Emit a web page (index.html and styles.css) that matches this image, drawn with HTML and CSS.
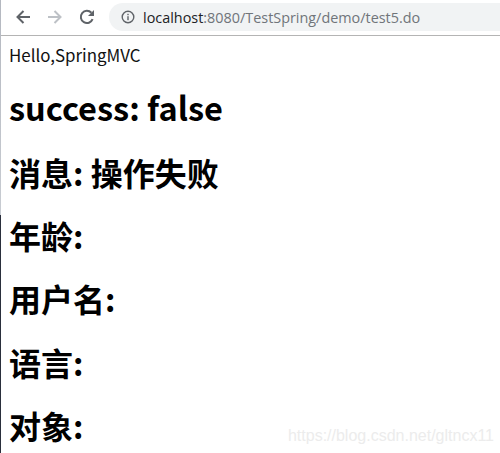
FILE: index.html

```html
<!DOCTYPE html>
<html lang="zh">
<head>
  <meta charset="UTF-8" />
  <title>test5</title>
  <link rel="stylesheet" href="styles.css">
</head>
<body>
  <div class="edge"></div>
  <div class="toolbar">
    <svg class="nav" viewBox="0 0 16 16" width="16" height="16">
      <path d="M15 8H2.5M8.5 2L2.5 8L8.5 14" fill="none" stroke="#5f6368" stroke-width="2"/>
    </svg>
    <svg class="nav" viewBox="0 0 16 16" width="16" height="16">
      <path d="M1 8H13.5M7.5 2L13.5 8L7.5 14" fill="none" stroke="#bdc1c6" stroke-width="2"/>
    </svg>
    <svg class="nav" viewBox="0 0 16 16" width="16" height="16">
      <path d="M13.6 10.2A6.1 6.1 0 1 1 12.4 3.8" fill="none" stroke="#5f6368" stroke-width="2"/>
      <path d="M15 1V7H9Z" fill="#5f6368"/>
    </svg>
    <div class="address">
      <svg class="info" viewBox="0 0 14 14" width="14" height="14">
        <circle cx="7" cy="7" r="5.8" fill="none" stroke="#5f6368" stroke-width="1.4"/>
        <rect x="6.3" y="6.2" width="1.4" height="4" fill="#5f6368"/>
        <rect x="6.3" y="3.8" width="1.4" height="1.4" fill="#5f6368"/>
      </svg>
      <span class="host">localhost</span><span class="path">:8080/TestSpring/demo/test5.do</span>
    </div>
  </div>

  <div class="page">
    <div class="hello">Hello,SpringMVC</div>
    <h1 class="latin">success: false</h1>
    <h1>消息: 操作失败</h1>
    <h1>年龄:</h1>
    <h1>用户名:</h1>
    <h1>语言:</h1>
    <h1>对象:</h1>
  </div>

  <div class="watermark">https://blog.csdn.net/gltncx11</div>
</body>
</html>
```

FILE: styles.css

```css
html, body {
  margin: 0;
  padding: 0;
  height: 100%;
  overflow: hidden;
  background: white;
}

body {
  position: relative;
  font-family: "Noto Sans CJK SC", "Noto Sans", sans-serif;
}

/* strip of the window behind, on the left side of the shot */
.edge {
  position: absolute;
  top: 0;
  left: 0;
  bottom: 0;
  width: 1px;
  background: linear-gradient(#b4b8c0 0, #c8ccd2 215px, #2a2f3c 215px);
}

.toolbar {
  height: 36px;
  box-sizing: border-box;
  border-bottom: 1px solid #b4b4b4;
  display: flex;
  align-items: center;
  padding: 0 0 1px 15px;
  gap: 16px;
}

.address {
  flex: 1;
  height: 28px;
  margin-left: -2px;
  padding-left: 12px;
  background: #f1f3f4;
  border-radius: 14px 0 0 14px;
  display: flex;
  align-items: center;
  font-family: "Open Sans", sans-serif;
  font-size: 14.4px;
}

.info {
  margin-right: 8px;
}

.host {
  color: #202124;
}

.path {
  color: #70757a;
}

.page {
  padding: 8px 9px;
}

.hello {
  font-size: 16.9px;
  line-height: 21px;
  color: #111;
}

h1 {
  font-size: 32px;
  line-height: 37px;
  font-weight: bold;
  margin: 26.2px 0 0 0;
  color: #000;
}

h1.latin {
  font-size: 32.5px;
  margin-top: 23px;
  margin-bottom: 29px;
}

.watermark {
  position: absolute;
  right: 6px;
  bottom: 8px;
  font-family: "Liberation Sans", sans-serif;
  font-size: 16px;
  color: #ececec;
}
```
